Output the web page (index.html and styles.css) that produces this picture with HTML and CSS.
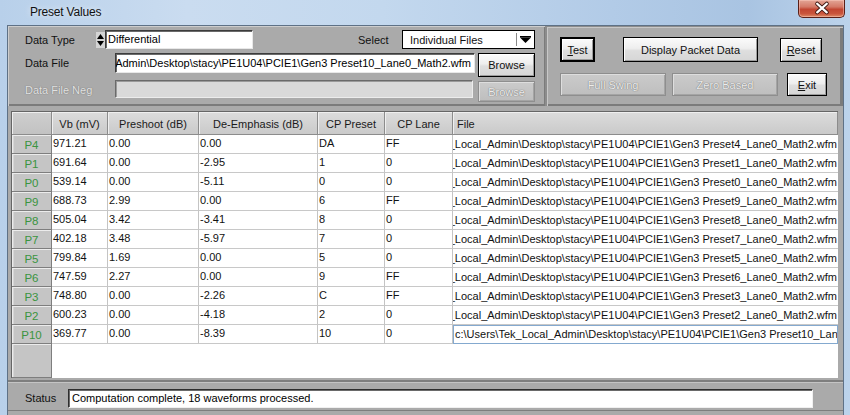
FILE: index.html
```html
<!DOCTYPE html>
<html>
<head>
<meta charset="utf-8">
<title>Preset Values</title>
<link rel="stylesheet" href="styles.css">
</head>
<body>
<div class="window">
  <div class="titlebar">
    <span class="title">Preset Values</span>
    <div class="close">
      <svg width="47" height="18" viewBox="0 0 47 18">
        <path d="M19 3.5 L29 12.5 M29 3.5 L19 12.5" stroke="#3b1712" stroke-width="4.2" stroke-linecap="round"/>
        <path d="M19 3.5 L29 12.5 M29 3.5 L19 12.5" stroke="#ffffff" stroke-width="2.4" stroke-linecap="round"/>
      </svg>
    </div>
  </div>
  <div class="client">
    <div class="top">
      <div class="lgroup">
        <div class="frow r1">
          <span class="lbl l-type">Data Type</span>
          <span class="spin">
            <svg width="9" height="16" viewBox="0 0 9 16">
              <rect x="0" y="0" width="9" height="16" fill="#d4d4d4"/>
              <polygon points="1,7 4.5,2 8,7" fill="#000"/>
              <polygon points="1,9 8,9 4.5,14" fill="#000"/>
            </svg>
          </span>
          <div class="edit ed-type">Differential</div>
          <span class="lbl l-select">Select</span>
          <div class="combo">
            <span class="ctext">Individual Files</span>
            <span class="drop">
              <svg width="11" height="7" viewBox="0 0 11 7">
                <rect x="0" y="0" width="11" height="1.5" fill="#000"/>
                <polygon points="0,1.5 11,1.5 5.5,7" fill="#000"/>
              </svg>
            </span>
          </div>
        </div>
        <div class="frow r2">
          <span class="lbl l-file">Data File</span>
          <div class="edit ed-file"><span>c:\Users\Tek_Local_Admin\Desktop\stacy\PE1U04\PCIE1\Gen3 Preset10_Lane0_Math2.wfm</span></div>
          <div class="btn browse">Browse</div>
        </div>
        <div class="frow r3">
          <span class="lbl l-file dis-lbl">Data File Neg</span>
          <div class="edit ed-neg"></div>
          <div class="btn dis browse-dis">Browse</div>
        </div>
      </div>
      <div class="rgroup">
        <div class="brow b1">
          <div class="btn def b-test"><span><u>T</u>est</span></div>
          <div class="btn b-dpd">Display Packet Data</div>
          <div class="btn b-reset"><span><u>R</u>eset</span></div>
        </div>
        <div class="brow b2">
          <div class="btn dis b-full">Full Swing</div>
          <div class="btn dis b-zero">Zero Based</div>
          <div class="btn b-exit"><span><u>E</u>xit</span></div>
        </div>
      </div>
    </div>

    <div class="gridwrap">
      <div class="grid">
        <div class="hc corner"></div>
        <div class="hc">Vb (mV)</div>
        <div class="hc">Preshoot (dB)</div>
        <div class="hc">De-Emphasis (dB)</div>
        <div class="hc">CP Preset</div>
        <div class="hc">CP Lane</div>
        <div class="hc hfile">File</div>

        <div class="rh">P4</div><div class="c">971.21</div><div class="c">0.00</div><div class="c">0.00</div><div class="c">DA</div><div class="c">FF</div><div class="c cf"><span>c:\Users\Tek_Local_Admin\Desktop\stacy\PE1U04\PCIE1\Gen3 Preset4_Lane0_Math2.wfm</span></div>
        <div class="rh">P1</div><div class="c">691.64</div><div class="c">0.00</div><div class="c">-2.95</div><div class="c">1</div><div class="c">0</div><div class="c cf"><span>c:\Users\Tek_Local_Admin\Desktop\stacy\PE1U04\PCIE1\Gen3 Preset1_Lane0_Math2.wfm</span></div>
        <div class="rh">P0</div><div class="c">539.14</div><div class="c">0.00</div><div class="c">-5.11</div><div class="c">0</div><div class="c">0</div><div class="c cf"><span>c:\Users\Tek_Local_Admin\Desktop\stacy\PE1U04\PCIE1\Gen3 Preset0_Lane0_Math2.wfm</span></div>
        <div class="rh">P9</div><div class="c">688.73</div><div class="c">2.99</div><div class="c">0.00</div><div class="c">6</div><div class="c">FF</div><div class="c cf"><span>c:\Users\Tek_Local_Admin\Desktop\stacy\PE1U04\PCIE1\Gen3 Preset9_Lane0_Math2.wfm</span></div>
        <div class="rh">P8</div><div class="c">505.04</div><div class="c">3.42</div><div class="c">-3.41</div><div class="c">8</div><div class="c">0</div><div class="c cf"><span>c:\Users\Tek_Local_Admin\Desktop\stacy\PE1U04\PCIE1\Gen3 Preset8_Lane0_Math2.wfm</span></div>
        <div class="rh">P7</div><div class="c">402.18</div><div class="c">3.48</div><div class="c">-5.97</div><div class="c">7</div><div class="c">0</div><div class="c cf"><span>c:\Users\Tek_Local_Admin\Desktop\stacy\PE1U04\PCIE1\Gen3 Preset7_Lane0_Math2.wfm</span></div>
        <div class="rh">P5</div><div class="c">799.84</div><div class="c">1.69</div><div class="c">0.00</div><div class="c">5</div><div class="c">0</div><div class="c cf"><span>c:\Users\Tek_Local_Admin\Desktop\stacy\PE1U04\PCIE1\Gen3 Preset5_Lane0_Math2.wfm</span></div>
        <div class="rh">P6</div><div class="c">747.59</div><div class="c">2.27</div><div class="c">0.00</div><div class="c">9</div><div class="c">FF</div><div class="c cf"><span>c:\Users\Tek_Local_Admin\Desktop\stacy\PE1U04\PCIE1\Gen3 Preset6_Lane0_Math2.wfm</span></div>
        <div class="rh">P3</div><div class="c">748.80</div><div class="c">0.00</div><div class="c">-2.26</div><div class="c">C</div><div class="c">FF</div><div class="c cf"><span>c:\Users\Tek_Local_Admin\Desktop\stacy\PE1U04\PCIE1\Gen3 Preset3_Lane0_Math2.wfm</span></div>
        <div class="rh">P2</div><div class="c">600.23</div><div class="c">0.00</div><div class="c">-4.18</div><div class="c">2</div><div class="c">0</div><div class="c cf"><span>c:\Users\Tek_Local_Admin\Desktop\stacy\PE1U04\PCIE1\Gen3 Preset2_Lane0_Math2.wfm</span></div>
        <div class="rh">P10</div><div class="c">369.77</div><div class="c">0.00</div><div class="c">-8.39</div><div class="c">10</div><div class="c">0</div><div class="c cedit"><span>c:\Users\Tek_Local_Admin\Desktop\stacy\PE1U04\PCIE1\Gen3 Preset10_Lane0_Math2.wfm</span></div>

        <div class="rh"></div><div class="empty"></div>
      </div>
    </div>

    <div class="status">
      <span class="lbl l-status">Status</span>
      <div class="edit st-box">Computation complete, 18 waveforms processed.</div>
    </div>
  </div>
</div>
</body>
</html>
```

FILE: styles.css
```css
* { box-sizing: border-box; }
html, body { margin: 0; padding: 0; }
body {
  width: 850px;
  height: 415px;
  overflow: hidden;
  font-family: "Liberation Sans", Arial, sans-serif;
  font-size: 11px;
  color: #000;
}

.window {
  width: 850px;
  height: 415px;
  display: flex;
  flex-direction: column;
  background: linear-gradient(90deg, #b8d0ea 0%, #cadcf0 22%, #c3d8ee 45%, #b2cbe7 72%, #a9c4e2 88%, #bcd3eb 100%);
}

/* title bar */
.titlebar {
  height: 25px;
  flex: none;
  display: flex;
  justify-content: space-between;
  align-items: flex-start;
  padding-left: 30px;
  padding-right: 5px;
}
.title {
  font-size: 12px;
  line-height: 24px;
  color: #111;
  letter-spacing: -0.2px;
  text-shadow: 0 0 6px rgba(255,255,255,0.8);
}
.close {
  width: 47px;
  height: 18px;
  border: 1px solid #5a2018;
  border-top: none;
  border-radius: 0 0 5px 5px;
  background: linear-gradient(#e3a596 0%, #d47a68 40%, #c24632 55%, #c9553c 80%, #de8a66 100%);
  box-shadow: inset 0 0 0 1px rgba(255,210,200,0.45);
  display: flex;
}

/* client area */
.client {
  flex: 1;
  margin: 0 6px 0 7px;
  border: 1px solid #5e7186;
  border-bottom: none;
  background: #aaaaaa;
  display: flex;
  flex-direction: column;
}

.top {
  height: 80px;
  flex: none;
  display: flex;
}
.lgroup {
  width: 537px;
  padding: 4px 0 0 17px;
  box-shadow: inset 1px 1px 0 #cdcdcd, inset -1px -2px 0 #7b7b7b;
  display: flex;
  flex-direction: column;
}
.rgroup {
  width: 298px;
  padding: 11px 0 0 15px;
  box-shadow: inset 2px 1px 0 #8c8c8c, inset 3px 2px 0 #c8c8c8, inset -3px -2px 0 #7b7b7b;
  display: flex;
  flex-direction: column;
}

.frow { display: flex; align-items: flex-start; }
.r1 { height: 19px; align-items: center; }
.r2 { height: 24px; margin-top: 4px; }
.r3 { height: 22px; margin-top: 3px; }

.lbl { flex: none; line-height: 20px; white-space: nowrap; color: #111; }
.l-type { width: 71px; }
.l-file { width: 90px; }
.l-select { width: 44px; margin-left: 105px; }
.dis-lbl { color: #e2e2e2; text-shadow: 0 0 1px #7c7c7c, 0 0 1px #7c7c7c; }

.spin { width: 9px; height: 16px; display: flex; }

.edit {
  flex: none;
  background: #fff;
  border-style: solid;
  border-width: 1px;
  border-color: #3c3c3c #e8e8e8 #e8e8e8 #3c3c3c;
  box-shadow: inset 1px 1px 0 #6a6a6a;
  padding-left: 2px;
  line-height: 17px;
  white-space: nowrap;
  overflow: hidden;
  color: #000;
}
.ed-type { width: 148px; height: 19px; }
.ed-file {
  width: 360px;
  height: 20px;
  line-height: 18px;
  display: flex;
  justify-content: flex-end;
  padding-right: 3px;
}
.ed-file span { flex: none; }
.ed-neg {
  width: 358px;
  height: 18px;
  background: #d9d9d9;
  border-color: #6a6a6a #ececec #ececec #6a6a6a;
  box-shadow: inset 1px 1px 0 #9a9a9a;
}

.combo {
  flex: none;
  width: 133px;
  height: 19px;
  background: #fff;
  border: 1px solid #000;
  display: flex;
  align-items: center;
  padding-left: 7px;
}
.ctext { flex: 1; white-space: nowrap; color: #111; }
.drop {
  width: 18px;
  height: 13px;
  border-left: 1px solid #8a8a8a;
  display: flex;
  align-items: center;
  justify-content: center;
}

/* buttons */
.btn {
  flex: none;
  display: flex;
  align-items: center;
  justify-content: center;
  white-space: nowrap;
  background: linear-gradient(#fbfbfb 0%, #eeeeee 45%, #dedede 55%, #d6d6d6 100%);
  border: 1px solid #000;
  box-shadow: inset 1px 1px 0 #ffffff, inset -1px -1px 0 #9c9c9c;
  color: #111;
}
.btn.def { border-width: 2px; }
.btn.dis {
  background: linear-gradient(#cbcbcb, #bebebe);
  border: 1px solid #8e8e8e;
  box-shadow: inset 1px 1px 0 #dedede, inset -1px -1px 0 #a4a4a4;
  color: #ececec;
  text-shadow: 0 0 1px #7a7a7a, 0 0 1px #7a7a7a;
}
.browse { width: 57px; height: 24px; margin-left: 3px; }
.browse-dis { width: 57px; height: 21px; margin-left: 5px; margin-top: 1px; }

.brow { display: flex; }
.b1 { height: 25px; }
.b2 { height: 23px; margin-top: 11px; }
.b-test { width: 35px; height: 25px; }
.b-dpd { width: 135px; height: 25px; margin-left: 28px; }
.b-reset { width: 42px; height: 24px; margin-left: 22px; margin-top: 1px; }
.b-full { width: 106px; height: 23px; }
.b-zero { width: 106px; height: 23px; margin-left: 6px; }
.b-exit { width: 40px; height: 23px; margin-left: 9px; }

/* grid */
.gridwrap {
  flex: none;
  height: 274px;
  padding: 5px 5px 0 3px;
}
.grid {
  width: 827px;
  height: 267px;
  border-left: 1px solid #666;
  border-top: 1px solid #666;
  background: #fff;
  display: grid;
  grid-template-columns: 40px 56px 91px 119px 67px 68px 385px;
  grid-template-rows: 23px repeat(11, 19px) 34px;
}
.hc {
  background: linear-gradient(#dcdcdc, #cacaca);
  border-right: 1px solid #8c8c8c;
  border-bottom: 1px solid #8c8c8c;
  box-shadow: inset 1px 1px 0 #efefef;
  text-align: center;
  line-height: 24px;
  white-space: nowrap;
  overflow: hidden;
  color: #1a1a1a;
}
.hfile { text-align: left; padding-left: 4px; }
.corner { background: linear-gradient(#cfcfcf, #c2c2c2); }

.rh {
  background: #c5c5c5;
  border-right: 1px solid #7e7e7e;
  border-bottom: 1px solid #7e7e7e;
  box-shadow: inset 1px 1px 0 #ececec, inset 2px 0 0 #d6d6d6;
  text-align: center;
  line-height: 21px;
  color: #3a9440;
  font-size: 11.5px;
}
.c {
  border-right: 1px solid #c4c4c4;
  border-bottom: 1px solid #c8c8c8;
  padding-left: 1px;
  line-height: 16px;
  white-space: nowrap;
  overflow: hidden;
  color: #111;
}
.cf {
  display: flex;
  justify-content: flex-end;
  padding-right: 1px;
  border-right: none;
  line-height: 19px;
}
.cf span { flex: none; }
.cedit {
  border: 1px solid #84a9cf;
  line-height: 16px;
  padding-left: 1px;
}
.empty {
  grid-column: 2 / 8;
  background: #fff;
}

/* status */
.status {
  flex: 1;
  display: flex;
  align-items: flex-start;
  padding: 6px 0 0 17px;
  border-top: 2px solid #7e7e7e;
  box-shadow: inset 0 1px 0 #c4c4c4, inset 0 -4px 0 #aaaaaa, inset 0 -5px 0 #7e7e7e;
}
.l-status { width: 43px; line-height: 19px; margin-top: 1px; }
.st-box {
  width: 745px;
  height: 19px;
  margin-top: 1px;
  padding-left: 3px;
  border-color: #2e2e2e #f0f0f0 #f0f0f0 #2e2e2e;
}
```
